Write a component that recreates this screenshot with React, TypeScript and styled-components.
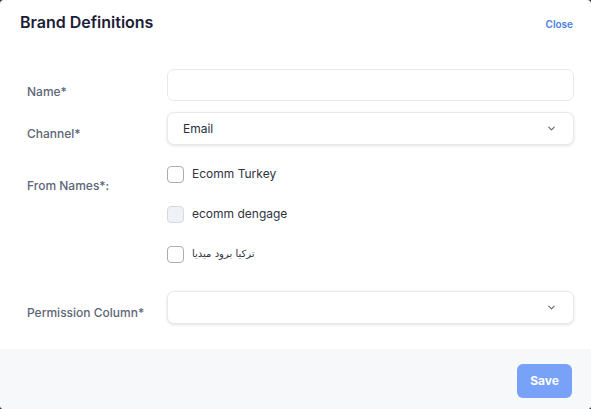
import React from "react";
import styled, { createGlobalStyle } from "styled-components";

const Global = createGlobalStyle`
  html, body { margin: 0; padding: 0; background: #3a3a3a; }
  body { font-family: Inter, "Noto Sans", sans-serif; }
  * { box-sizing: border-box; }
`;

const Modal = styled.div`
  width: 591px;
  height: 409px;
  background: #ffffff;
  border-radius: 4px;
  overflow: hidden;
  display: flex;
  flex-direction: column;
`;

const Header = styled.div`
  display: flex;
  align-items: center;
  justify-content: space-between;
  height: 46px;
  padding: 0 18px 2px 20px;
`;

const Title = styled.h1`
  margin: 0;
  font-size: 16px;
  font-weight: 600;
  color: #1b1d36;
  letter-spacing: 0;
`;

const CloseLink = styled.span`
  font-size: 10px;
  font-weight: 600;
  color: #4a80e3;
  margin-top: 4px;
`;

const Body = styled.div`
  flex: 1;
  padding: 23px 17px 0 27px;
  display: flex;
  flex-direction: column;
`;

const Row = styled.div<{ $mt?: number }>`
  display: grid;
  grid-template-columns: 140px 1fr;
  align-items: start;
  margin-top: ${(p) => p.$mt ?? 0}px;
`;

const Label = styled.label<{ $pt: number }>`
  font-size: 12px;
  font-weight: 500;
  color: #5d6678;
  padding-top: ${(p) => p.$pt}px;
  line-height: 15px;
`;

const Field = styled.div<{ $shadow?: boolean; $h: number }>`
  height: ${(p) => p.$h}px;
  border: 1px solid #e6e8ec;
  border-radius: 7px;
  background: #fff;
  display: flex;
  align-items: center;
  justify-content: space-between;
  padding: 0 16px 0 15px;
  box-shadow: ${(p) => (p.$shadow ? "0 1px 3px rgba(16,24,40,0.12)" : "none")};
  font-size: 12px;
  color: #2a2d3a;
`;

const Checks = styled.div`
  display: flex;
  flex-direction: column;
  gap: 23px;
  padding-top: 1px;
`;

const CheckItem = styled.div`
  display: flex;
  align-items: center;
  gap: 8px;
  height: 17px;
`;

const Box = styled.span<{ $muted?: boolean }>`
  width: 17px;
  height: 17px;
  border-radius: 4px;
  border: 1px solid ${(p) => (p.$muted ? "#d5dae2" : "#a8adb6")};
  background: ${(p) => (p.$muted ? "#eef1f5" : "#fff")};
  flex: none;
`;

const CheckText = styled.span<{ $ar?: boolean }>`
  font-size: ${(p) => (p.$ar ? "10px" : "12px")};
  color: #2f3240;
  font-family: ${(p) =>
    p.$ar ? '"DejaVu Sans", "Noto Sans", sans-serif' : 'Inter, "Noto Sans", sans-serif'};
  margin-top: -2px;
`;

const Footer = styled.div`
  height: 60px;
  background: #f7f8fa;
  display: flex;
  align-items: center;
  justify-content: flex-end;
  padding: 0 19px 0 0;
`;

const SaveButton = styled.button`
  width: 55px;
  height: 34px;
  border: none;
  border-radius: 6px;
  background: #78a1f8;
  color: #fff;
  font-family: Inter, "Noto Sans", sans-serif;
  font-size: 12px;
  font-weight: 700;
  margin-top: 3px;
`;

const Chevron = () => (
  <svg width="11" height="11" viewBox="0 0 24 24" fill="none" stroke="#5d6678" strokeWidth="2.4" strokeLinecap="round" strokeLinejoin="round">
    <path d="M6 9l6 6 6-6" />
  </svg>
);

export default function App() {
  return (
    <>
      <Global />
      <Modal>
        <Header>
          <Title>Brand Definitions</Title>
          <CloseLink>Close</CloseLink>
        </Header>
        <Body>
          <Row>
            <Label $pt={15}>Name*</Label>
            <Field $h={32} />
          </Row>
          <Row $mt={11}>
            <Label $pt={14}>Channel*</Label>
            <Field $h={33} $shadow>
              <span>Email</span>
              <Chevron />
            </Field>
          </Row>
          <Row $mt={20}>
            <Label $pt={13}>From Names*:</Label>
            <Checks>
              <CheckItem>
                <Box />
                <CheckText>Ecomm Turkey</CheckText>
              </CheckItem>
              <CheckItem>
                <Box $muted />
                <CheckText>ecomm dengage</CheckText>
              </CheckItem>
              <CheckItem>
                <Box />
                <CheckText $ar dir="rtl">تركيا برود ميديا</CheckText>
              </CheckItem>
            </Checks>
          </Row>
          <Row $mt={28}>
            <Label $pt={14}>Permission Column*</Label>
            <Field $h={33} $shadow>
              <span />
              <Chevron />
            </Field>
          </Row>
        </Body>
        <Footer>
          <SaveButton>Save</SaveButton>
        </Footer>
      </Modal>
    </>
  );
}
